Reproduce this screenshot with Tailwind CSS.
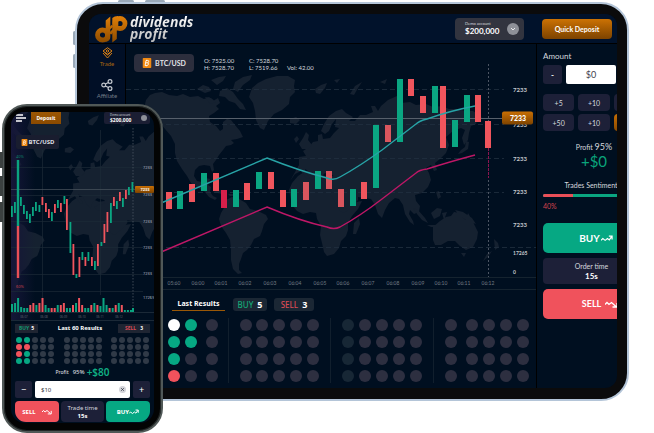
<!DOCTYPE html>
<html lang="en">
<head>
<meta charset="utf-8">
<meta name="viewport" content="width=device-width, initial-scale=1">
<title>dividends profit</title>
<script src="https://cdn.jsdelivr.net/npm/@tailwindcss/browser@4"></script>
</head>
<body class="bg-white text-[8px] leading-[10px] text-[#d5d8de] font-[Lato,'Noto_Sans',sans-serif]">
<svg width="0" height="0" class="absolute" aria-hidden="true">
  <defs>
    <linearGradient id="orange" x1="0" y1="0" x2="0" y2="1"><stop offset="0" stop-color="#c97004"/><stop offset="1" stop-color="#7d4300"/></linearGradient>
    <linearGradient id="mark" gradientUnits="userSpaceOnUse" x1="0" y1="0" x2="0" y2="28"><stop offset="0" stop-color="#e58208"/><stop offset="1" stop-color="#8a4a00"/></linearGradient>
    <symbol id="world" viewBox="0 0 654 433" overflow="visible">
      <path d="M146 100l4-5 5-2 7-1 7 3 8 1 6-2 7 3 8-1 6 3 5-2 4 4 5-3 2 5-4 3 3 3-5 4-5 3 1 6 6 4 4 5 3-2 0-7 4-3 4 1 4 5 5 6 3 6-6 2-6 1 3 3-3 2-5 1-3 4-4 5-3 5-3 4 1 6-2 2-2-6-6-1-5 1-4 4-1 6 3 5 5 1 4-4 4 1-2 6 3 2-1 5 3 4 4 2-2 2-6-3-5-6-6-3-7-5-4-7-5-7-5-8-2-8 0-9-4-8-6-7-5-6-8 0-8 5-5 2 5-5-4-4 2-4z"/>
      <path d="M197 89l6-4 6 2 2 4-6 2zM211 80l8-3 7-1-3 5-6 4zM220 91l7-3 6 4 5 7 5 5 3 6-6-1-5-6-6-2-4-4-6-1zM205 97l6 1 5 4-6 2zM235 82l8-5 9-2-2 5-7 5-5 7-5-3zM212 192l9-2 6 3-4 1-6-1zM228 194l5 0 2 2-5 0z"/>
      <path d="M252 88l6-5 8-4 11-3 11 0 7 4-1 6 1 6-5 5-1 7-7 6-8 4-6 7-4 9-4-2-4-8-1-9-2-8-4-6zM290 119l6-2 4 3-4 4-6-1zM315 89l6-4 6-2-2 5-5 6-4-1z"/>
      <path d="M226 200l6-3 7 2 7 4 4 6 8 2 8 4 2 4-4 5-2 7-2 5-6 3-3 6-4 5-4 3-2 6-2 5 0 6 3 3-4 1-5-5-2-9 0-10-1-10-4-7-5-7-2-7 2-6 3-5z"/>
      <path d="M289 190l3-7 6-7 6-4 10-2 5-1 1 5 7 3 6-1 9 2 3 6 3 8 4 7 4 3 6-1-4 8-6 7-4 7 0 7-2 6-5 5-2 7-5 6-7 2-3-4-2-9-2-8 1-9-4-7-1-6-6-1-7 2-6-3-5-6zM354 223l5-5 1 6-4 10-3 0z"/>
      <path d="M299 165l0-8 7-1-3-5 6-4 4-5 5-1 0-6 4-1 1 5 7-1 4-5 5-5-4-1 1-8-4 5-3 7-4 3-4-3 3-7 5-8 7-5 6-2 4 4 7 4-4 4 6 0 5-6 6 0 7-3-2-6 4 0 3 5 3-5 7-6 9-4 5 2-1 5 9-1 6 3 10-1 7 3 9-1 7 3 9 0 7 2 8 0 6 4 3 3-5 2-1 4-5 2-2 7-1 7-4 5-2-7 3-8-4-2-8 3-7 6 3 8-3 8-6 6-5 4 2 7-3 1-3-6-5 3 3 5 2 7-3 7-6 6-7 2 1 6 4 5-1 6-5 2-4-4-1 4 4 7 1 4-4-3-5-8-2-9-4-6-4-1-6 5-4 7-3 8-4-4-3-9-4-6-7-1-6-1 0 3-5 6-9 7-4-2-5-9-5-9 2-6-7-1-3-3 5-3 7-1-1-4-8-2-5 5-2 6-4-4-4-8-5-3 1 4 4 5-3 1-6-8-6 3-5 7z"/>
      <path d="M299 144l4-6 3-6 3 3-1 5 4 5-4 4-6 0zM294 139l3-3 2 3-3 4zM350 94l5-8 7-4-4 6-4 7zM334 80l6-1-3 4zM380 82l7-3-2 5zM461 150l4-3 1-6 3 1-1 7-6 4-4 1zM436 192l3-1 2 6-3 2zM413 208l5 2 7 8 3 5-6-3-5-6zM427 225l8 0 4 2-8 0zM431 213l6-5 5 1-2 7-6 3zM442 213l5-1-3 8zM455 210l8 2 9 6 4 6-8-3-7-4zM433 227l7-6 6-4 5-1 3-4 6 1 1 4 5 3 2-7 4 7 3 6 3 6-1 7-4 8-7 3-6-4-5-5-7 0-7 4-6 0-2-5zM461 253l5 0-2 4zM494 239l4 4 1 4-4 3zM492 251l-4 6-5 4 4-7z"/>
    </symbol>
    <symbol id="up" viewBox="0 0 13 7"><path d="M0 5.500l2-2 2.500 2 2.500-2L9 5l2.500-3.500M8.500 1H12v3.500" fill="none" stroke="currentColor" stroke-width="1.300"/></symbol>
    <symbol id="down" viewBox="0 0 13 7"><path d="M0 3.500l2-2 2 2 2.500-2 4.500 4M7.500 6H12V2" fill="none" stroke="currentColor" stroke-width="1.300"/></symbol>
    <symbol id="btc" viewBox="0 0 9 10"><rect width="9" height="10" rx="1" fill="#f18a12"/><path d="M3.500 2.500h1.700q1.300 0 1 1.200-.2 1-1.200 1.100 1.200.2.900 1.500-.3 1.200-1.600 1.200H2.600zM3.300 4.800H5M4.300 1.700l-.2.800M4 7.500l-.2.800" fill="none" stroke="#fff" stroke-width=".9"/></symbol>
  </defs>
</svg>

<div class="relative pt-[2px] pr-[25px] pb-8 pl-[75px]">
  <i class="absolute left-[118px] top-0 h-[3px] w-4 rounded bg-[#9aa9b8]"></i>
  <i class="absolute left-[145px] top-0 h-[3px] w-5 rounded bg-[#9aa9b8]"></i>
  <i class="absolute left-[73px] top-[31px] h-[14px] w-[3px] rounded bg-[#9aa9b8]"></i>
  <i class="absolute left-[73px] top-[54px] h-[14px] w-[3px] rounded bg-[#9aa9b8]"></i>

  <!-- Tablet -->
  <div class="relative rounded-[28px] border-2 border-[#b4c5d8] bg-[#0b0b0c] pt-[10px] pr-[10px] pb-[11px] pl-3">
    <div class="overflow-hidden rounded-[12px] bg-[#000f20]">
      <header class="flex h-[30px] items-center border-b border-black bg-[#01122b] pr-[5px] pl-[6px]">
        <a href="#" class="flex items-center gap-[2px]" aria-label="dividends profit">
          <svg width="33" height="28" viewBox="0 0 33 28" fill="none" stroke="url(#mark)">
            <circle cx="7.500" cy="20" r="5" stroke-width="4.800"/>
            <circle cx="25" cy="8.500" r="5" stroke-width="4.800"/>
            <path d="M10.700 5.500l4.600-4V22q0 4-4.600 5z" fill="url(#mark)" stroke="none"/>
            <path d="M17.300 3q2-2 6-2v9l-1.500 3V24l-4.500 3.500z" fill="url(#mark)" stroke="none"/>
            <path d="M8 14.500q6.500 1 9.300-4M15.300 19q2-4 6.500-5" stroke-width="2.400"/>
          </svg>
          <span class="bg-linear-to-b from-white to-[#b9b9b9] bg-clip-text pr-1 pb-[2px] font-['Open_Sans',sans-serif] text-[14px] leading-[12px] font-bold text-transparent italic">dividends<br>profit</span>
        </a>
        <button class="ml-auto flex h-[22px] w-[69px] items-center justify-between rounded-[4px] bg-[#32343f] pr-[5px] pl-[10px] text-left">
          <span><span class="block text-[4px] leading-[6px]">Demo account</span><span class="block text-[8px] leading-[9px] font-bold text-white">$200,000</span></span>
          <svg width="12" height="12" viewBox="0 0 12 12"><circle cx="6" cy="6" r="6" fill="#8e9098"/><path d="M4 5l2 2 2-2" fill="none" stroke="#e8e8ea"/></svg>
        </button>
        <button class="ml-[18px] h-5 w-[70px] rounded-[4px] bg-linear-to-b from-[#cc7204] to-[#7d4300] text-[7px] font-bold text-white">Quick Deposit</button>
      </header>

      <div class="flex">
        <nav class="flex w-[37px] flex-col items-center gap-[11px] border-r border-black bg-[#010f26] pt-[3px]">
          <a href="#" class="flex flex-col items-center text-[6px] leading-[9px] text-[#a86511]">
            <svg width="11" height="12" viewBox="0 0 11 12" fill="none" stroke="#d98016" stroke-width="1"><path d="M5.500.7L10 4 5.500 7.300 1 4zM1 6l4.500 5L10 6M2.500 5.500L5.500 8l3-2.500M4 4l1.500-1.200L7 4 5.500 5.200z"/></svg>Trade</a>
          <a href="#" class="flex flex-col items-center text-[6px] leading-[9px] text-[#727b88]">
            <svg width="12" height="12" viewBox="0 0 12 12" fill="none" stroke="#c3c8cf" stroke-width="1.200"><circle cx="2.700" cy="6" r="1.900"/><circle cx="9" cy="2.500" r="1.900"/><circle cx="9" cy="9.500" r="1.900"/><path d="M4.400 5.100l3-1.700M4.400 6.900l3 1.700"/></svg>Affiliate</a>
        </nav>

        <main class="min-w-0 flex-1">
          <section class="relative">
            <div class="absolute top-[10px] left-2 flex items-center gap-[10px]">
              <button class="flex h-[18px] w-[60px] items-center justify-center gap-[3px] rounded-[4px] bg-[#2c2e3d] text-[7px] font-bold text-[#e3e4e8]"><svg width="10" height="10" viewBox="0 0 9 10"><use href="#btc"/></svg>BTC/USD</button>
              <div class="grid grid-cols-[45px_38px_auto] pt-[1px] text-[6px] leading-[7px]">
                <span>O: 7525.00</span><span>C: 7528.70</span><span></span>
                <span>H: 7528.70</span><span>L: 7519.66</span><span>Vol: 42.00</span>
              </div>
            </div>
            <svg class="block w-full" viewBox="126 44 410 246" role="img" aria-label="BTC/USD chart">
              <use href="#world" width="654" height="433" fill="#152130"/>
              <g stroke="#213040" stroke-dasharray="5 3" stroke-width=".8"><path d="M126 89.500h378M126 124.500h378M126 158.500h378M126 192.500h378M126 247.500h410"/></g>
              <path d="M126 118.500h376" stroke="#57606b" stroke-width="1"/>
              <path d="M126 277.500h410M126 289.500h410" stroke="#15232f"/>
              <path d="M488.500 64v213" stroke="#4c5563" stroke-dasharray="2 2"/>
              <path d="M488.500 148v30" stroke="#8a1550" stroke-dasharray="3 1"/>
              <g id="candles"></g>
              <path d="M160 203.500L267 158q33 13 60 20 7 3 13-1Q360 166 382 150l34-26q3-3 11-5 22-8 48-13" fill="none" stroke="#27a3a6" stroke-width="1.400"/>
              <path d="M160 252.500L267 207q33 14 60 20 7 3 13 0Q360 216 382 199l34-26q3-3 11-4 22-7 48-14" fill="none" stroke="#bd1766" stroke-width="1.400"/>
              <g id="times" fill="#727b85" font-size="5" text-anchor="middle"></g>
              <g fill="#c5c9ce" font-size="6" font-weight="700"><text x="513" y="91.500">7233</text><text x="513" y="127">7233</text><text x="513" y="160.500">7233</text><text x="513" y="194">7233</text><text x="513" y="227">7233</text><g font-size="5"><text x="513" y="255">17265</text><text x="513" y="274">0</text></g></g>
              <rect x="502" y="111.500" width="31" height="13" rx="2" fill="url(#orange)"/><text x="518" y="120.500" fill="#fff" font-size="7" font-weight="900" text-anchor="middle">7233</text>
            </svg>
          </section>
          <section class="pt-2 pb-[5px]">
            <div class="flex items-center pl-[46px] font-['Noto_Sans',sans-serif] font-bold">
              <h2 class="flex h-[13px] w-[53px] items-center justify-center border-b border-[#9a5807] text-[7px] whitespace-nowrap text-white">Last Results</h2>
              <div class="ml-2 flex h-[13px] w-[34px] items-center justify-center gap-1 rounded-[3px] bg-[#1b2734] text-[8px]"><span class="font-medium text-[#13a777]">BUY</span><span class="text-[9px] text-white">5</span></div>
              <div class="ml-[7px] flex h-[13px] w-[40px] items-center justify-center gap-1 rounded-[3px] bg-[#1b2734] text-[8px]"><span class="font-medium text-[#d94b56]">SELL</span><span class="text-[9px] text-white">3</span></div>
            </div>
            <div id="results" class="mt-[7px] grid grid-cols-4"></div>
          </section>
        </main>

        <aside class="w-[81px] overflow-hidden border-l border-black pt-[7px] pl-[6px]">
          <form class="w-[102px]">
            <label for="amount" class="block text-[8px] leading-[10px]">Amount</label>
            <div class="mt-1 flex gap-1">
              <button type="button" class="h-[19px] w-[19px] rounded-[3px] bg-[#1d2038] font-bold text-white">-</button>
              <input id="amount" value="$0" class="h-[19px] w-[50px] rounded-[2px] bg-white text-center text-[9px] text-[#40434e]">
            </div>
            <div class="mt-[10px] grid grid-cols-3 gap-x-[4px] gap-y-[3px] text-[7px]">
              <button type="button" class="h-[17px] rounded-[4px] bg-[#1d2038]">+5</button>
              <button type="button" class="h-[17px] rounded-[4px] bg-[#1d2038]">+10</button>
              <button type="button" class="h-[17px] rounded-[4px] bg-[#1d2038]" aria-label="Add 25"></button>
              <button type="button" class="h-[17px] rounded-[4px] bg-[#1d2038]">+50</button>
              <button type="button" class="h-[17px] rounded-[4px] bg-[#1d2038]">+10</button>
              <button type="button" class="h-[17px] rounded-[4px] bg-linear-to-b from-[#c46d04] to-[#8a4b00]" aria-label="All"></button>
            </div>
            <p class="mt-[10px] text-center text-[7px] leading-[12px]">Profit <span class="text-[9px]">95%</span></p>
            <p class="text-center text-[15px] leading-[17px] text-[#0aa47b]">+$0</p>
            <p class="mt-[10px] pr-[6px] text-center text-[7px] leading-[10px]">Trades Sentiment</p>
            <div class="mt-[4px] flex h-[3px] overflow-hidden rounded bg-[#0aa580]"><i class="w-[30px] bg-[#e94f58]"></i></div>
            <p class="mt-1 text-[7px] leading-[10px] text-[#d3434e]">40%</p>
            <button type="button" class="mt-3 flex h-[30px] w-full items-center justify-center gap-[1px] rounded-[5px] bg-[#06a883] pl-1 text-[10px] font-bold text-white">BUY<svg width="12" height="7"><use href="#up"/></svg></button>
            <button type="button" class="mt-[5px] h-[26px] w-full rounded-[4px] bg-[#1d2038] pr-[5px] text-[7px] leading-[10px]">Order time<b class="block text-[8px] text-white">15s</b></button>
            <button type="button" class="mt-[5px] flex h-[30px] w-full items-center justify-center gap-1 rounded-[5px] bg-[#f0525c] pl-3 text-[9px] font-bold text-white">SELL<svg width="13" height="7"><use href="#down"/></svg></button>
          </form>
        </aside>
      </div>
    </div>
  </div>

  <!-- Phone -->
  <div class="absolute top-[104px] left-[2px] w-[161px] rounded-[25px] border-2 border-[#505857] bg-[#030404] px-[7px] pt-[6px] pb-2 shadow-[inset_0_0_0_1px_#222727]">
    <i class="absolute top-[46px] -left-[4px] h-4 w-[3px] bg-[#3b4140]"></i>
    <i class="absolute top-[70px] -left-[4px] h-5 w-[3px] bg-[#3b4140]"></i>
    <i class="absolute top-[96px] -left-[4px] h-5 w-[3px] bg-[#3b4140]"></i>
    <div class="overflow-hidden rounded-[14px] bg-[#000f20] font-['Noto_Sans',sans-serif]">
      <section class="relative">
        <div class="absolute inset-x-0 top-0 flex h-3 items-center pr-1 pl-[5px]">
          <button aria-label="Menu"><svg class="block" width="10" height="8" viewBox="0 0 10 8"><path d="M0 1h7M0 4h10M0 7h6" stroke="#fff" stroke-width="1.500"/></svg></button>
          <button class="ml-[5px] h-3 w-[30px] bg-linear-to-b from-[#9c5703] to-[#8a4a00] text-[5px] leading-[8px] font-bold text-white">Deposit</button>
          <button class="ml-auto flex h-3 w-[46px] items-center justify-between rounded-[2px] bg-[#1b1e33] pr-[3px] pl-[6px] text-left"><span><span class="block text-[3px] leading-[4px]">Demo account</span><span class="block text-[5px] leading-[6px] font-bold text-white">$200,000</span></span><svg width="6" height="6"><circle cx="3" cy="3" r="3" fill="#8e9098"/></svg></button>
        </div>
        <button class="absolute top-[23px] left-[5px] flex h-[14px] w-[43px] items-center justify-center gap-[1px] rounded-[2px] bg-[#191d2f] text-[6px] font-bold text-[#dddfe4]"><svg width="7" height="7" viewBox="0 0 9 10"><use href="#btc"/></svg>BTC/USD</button>
        <svg class="block w-full" viewBox="11 112 143 209" role="img" aria-label="Mobile BTC/USD chart">
          <defs><linearGradient id="fade"><stop offset="0" stop-color="#151638"/><stop offset="1" stop-color="#151638" stop-opacity="0"/></linearGradient></defs>
          <g transform="translate(-202 39) scale(.92)"><use href="#world" width="654" height="433" fill="#152130"/></g>
          <rect x="11" y="112" width="24" height="209" fill="url(#fade)"/>
          <path d="M11 167.500h132M11 195.500h124M11 221.500h132M11 247.500h132M11 274.500h132M11 291.500h132M42.500 150v150M100.500 130v165" stroke="#1b2937" stroke-width=".7"/>
          <path d="M11 189.500h125" stroke="#4b545f" stroke-width=".7"/>
          <path d="M133 128v184" stroke="#4c5563" stroke-width=".8" stroke-dasharray="1.500 1.500"/>
          <path d="M11 312.500h143M11 320.500h143" stroke="#1b2937"/>
          <path d="M18 160v66" stroke="#0ba37f" stroke-width="2.400"/><path d="M18 226v52" stroke="#e84f57" stroke-width="2.400"/>
          <g font-size="4"><text x="16" y="158" fill="#0b8269">40%</text><text x="16" y="288" fill="#c9404c">60%</text></g>
          <g id="mini"></g>
          <g fill="#b4b9c0" font-size="4"><text x="143" y="168.500">7233</text><text x="143" y="196">7233</text><text x="143" y="222.500">7233</text><text x="143" y="249">7233</text><text x="143" y="275">7233</text><text x="143" y="299">17265</text></g>
          <rect x="135" y="186" width="19" height="7" rx="1" fill="url(#orange)"/><text x="145" y="191" fill="#fff" font-size="4" font-weight="700" text-anchor="middle">7233</text>
          <g id="miniTimes" fill="#59626e" font-size="3" text-anchor="middle"></g>
        </svg>
      </section>
      <section class="px-1 pt-[3px]">
        <div class="flex items-center justify-between text-[6px] leading-[9px] font-bold text-white">
          <span class="flex h-[9px] w-[23px] items-center justify-center gap-[2px] bg-[#1f2532] text-[5px]"><span class="text-[#13936f]">BUY</span>5</span>
          <h2 class="pl-1">Last 60 Results</h2>
          <span class="flex h-[9px] w-[32px] items-center justify-center gap-1 bg-[#1f2532] text-[5px]"><span class="text-[#d94b56]">SELL</span>3</span>
        </div>
        <div id="miniResults" class="mt-1 flex justify-between px-[1px]"></div>
        <p class="mt-[1px] flex items-center justify-center gap-1 text-[6px] leading-[14px] font-medium"><span class="text-[5px]">Profit</span><span>95%</span><b class="-ml-[2px] text-[10px] font-semibold text-[#0fae83]">+$80</b></p>
        <div class="mt-[2px] flex gap-[3px]">
          <button class="h-[17px] w-[17px] rounded-[2px] bg-[#1d2038] text-[9px] text-white">−</button>
          <div class="relative flex-1"><input aria-label="Amount" value="$10" class="h-[17px] w-full rounded-[2px] bg-white pl-[6px] text-[6px] text-[#30333d]"><button aria-label="Clear" class="absolute top-[5px] right-[4px]"><svg class="block" width="7" height="7" viewBox="0 0 7 7"><circle cx="3.500" cy="3.500" r="3.500" fill="#d3d4da"/><path d="M2.200 2.200l2.600 2.600m0-2.600L2.200 4.800" stroke="#333744" stroke-width=".8"/></svg></button></div>
          <button class="h-[17px] w-[17px] rounded-[2px] bg-[#1d2038] text-[9px] text-white">+</button>
        </div>
        <div class="mt-[3px] grid grid-cols-[44px_1fr_44px] gap-[2px] pb-[1px]">
          <button class="flex h-[21px] items-center justify-center gap-[6px] rounded-[4px] rounded-bl-[11px] bg-[#f0525c] text-[6px] font-bold text-white">SELL<svg width="10" height="6"><use href="#down"/></svg></button>
          <button class="h-[21px] rounded-[4px] bg-[#1d2038] text-[6px] leading-[8px] whitespace-nowrap">Trade time<b class="block text-white">15s</b></button>
          <button class="flex h-[21px] items-center justify-center rounded-[4px] rounded-br-[11px] bg-[#06a883] text-[6px] font-bold text-white">BUY<svg width="10" height="6"><use href="#up"/></svg></button>
        </div>
      </section>
    </div>
  </div>
</div>

<script>
const colors = {r: '#f0555d', g: '#0aa682', c: '#d71f4a', d: '#d9565e'};
const bar = (x, y1, y2, c, w) => `<rect x="${x}" y="${y1}" width="${w}" height="${y2 - y1}" fill="${colors[c]}"/>`;
const candles = [[166,192,209,'r'],[177,191,209,'g'],[189,184,202,'r'],[201,173,191,'g'],[213,173,191,'r'],[221,190,208,'c'],[233,190,207,'g'],[244,183,200,'r'],[256,172,189,'g'],[268,172,189,'r'],[280,190,207,'r'],[291,189,207,'g'],[303,182,200,'d'],[315,171,189,'g'],[326,171,189,'d'],[338,189,207,'d'],[350,189,206,'g'],[361,182,199,'r'],[373,125,188,'g'],[385,125,142,'d'],[397,79,142,'g'],[408,79,96,'r'],[420,96,113,'r'],[432,86,113,'g'],[440,86,148,'r'],[452,120,147,'g'],[464,95,122,'g'],[475,95,122,'r'],[485,121,148,'r']];
document.getElementById('candles').innerHTML = candles.map(c => bar(...c, 6)).join('');

const times = [[174,'05:60'],[198,'06:00'],[221,'06:01'],[245,'06:02'],[270,'06:03'],[295,'06:04'],[320,'06:05'],[343,'06:06'],[368,'06:07'],[393,'06:08'],[418,'06:09'],[441,'06:10'],[464,'06:11'],[488,'06:12']];
document.getElementById('times').innerHTML = times.map(([x, t]) => `<text x="${x}" y="285">${t}</text>`).join('');

const mini = [[11,206,217,'g'],[14,202,213,'g'],[20,197,206,'g'],[23,205,214,'g'],[26,211,219,'g'],[29,214,223,'g'],[32,207,216,'g'],[35,202,211,'g'],[38.5,205,212,'g'],[41.500,197,205,'r'],[45,203,212,'r'],[48,209,218,'r'],[51,212,221,'g'],[54,204,213,'r'],[57,200,208,'g'],[60,203,212,'r'],[63.500,196,204,'g'],[66,199,230,'r'],[69.500,222,253,'g'],[72.500,244,275,'r'],[75.500,274,278,'g'],[78.500,257,277,'r'],[81.500,252,260,'g'],[84.500,257,266,'r'],[87.500,252,261,'g'],[91,257,266,'r'],[94,261,270,'g'],[97,244,266,'r'],[100.500,242,246,'g'],[103.500,224,243,'r'],[106.500,212,232,'r'],[110,203,223,'g'],[113,197,206,'r'],[116,201,209,'g'],[119,192,201,'r'],[122,198,207,'g'],[125,190,199,'r'],[128,187,195,'g'],[131.500,182,192,'g']];
const volumes = [[8,'g'],[9,'g'],[14,'g'],[5,'g'],[4,'g'],[4,'g'],[7,'r'],[9,'r'],[7,'g'],[9,'r'],[14,'r'],[7,'g'],[4,'g'],[4,'r'],[4,'r'],[7,'g'],[7,'r'],[9,'r'],[4,'g'],[4,'g'],[7,'r'],[9,'g'],[14,'r'],[7,'r'],[4,'g'],[4,'g'],[7,'r'],[9,'g'],[7,'r'],[6,'g'],[14,'g'],[7,'g'],[4,'r'],[4,'g'],[7,'r'],[9,'g'],[7,'r'],[2,'g'],[2,'g'],[2,'g']];
document.getElementById('mini').innerHTML = mini.map(c => bar(...c, 1.8)).join('') +
  volumes.map(([h, c], i) => bar(11 + i * 3.05, 312 - h, 312, c, 2)).join('') + bar(132, 308, 312, 'g', 2);
document.getElementById('miniTimes').innerHTML = [[24,'06:07'],[44,'06:08'],[63.5,'06:09'],[82,'06:10'],[100,'06:11'],[119,'06:12']].map(([x, t]) => `<text x="${x}" y="318">${t}</text>`).join('');

const tone = {x: 'bg-[#2d2f40]', g: 'bg-[#06a883]', r: 'bg-[#f0525c]', w: 'bg-white', d: 'bg-[#172735]', s: 'bg-[#303a47]'};
const groups = [
  {box: 'justify-end gap-[5px] pr-[10px]', rows: ['gwgx', 'rggx', 'ggxx', 'grxx'], wide: 3},
  {box: 'justify-between px-[11px]', rows: ['xxxxx', 'xxxxx', 'xxxxx', 'xxxxx']},
  {box: 'justify-between px-[11px]', rows: ['dxxxx', 'dxxxx', 'dxxxx', 'dxxxx']},
  {box: 'justify-end gap-[5px] pr-[7px]', rows: ['xxxxx', 'xxxxx', 'xxxxx', 'xxxxx'], wide: 1}
];
document.getElementById('results').innerHTML = groups.map((g, n) =>
  `<div class="flex flex-col gap-[5px] py-[1px] ${n < 3 ? 'border-r border-[#111f2d]' : ''}">` + g.rows.map(r =>
    `<div class="flex ${g.box}">` + [...r].map((c, i) => `<i class="size-3 rounded-full ${tone[c]} ${g.wide === i ? 'ml-1' : ''}"></i>`).join('') + '</div>').join('') + '</div>').join('');
document.getElementById('miniResults').innerHTML = [['ggsss', 'rrsss', 'rgsss', 'ggsss'], ['sssss', 'sssss', 'sssss', 'sssss'], ['sssss', 'sssss', 'sssss', 'sssss']].map(g =>
  '<div class="grid grid-cols-5 gap-x-[2px] gap-y-[1px]">' + g.join('').split('').map(c => `<i class="size-[6px] rounded-full ${tone[c]}"></i>`).join('') + '</div>').join('');
</script>
</body>
</html>
